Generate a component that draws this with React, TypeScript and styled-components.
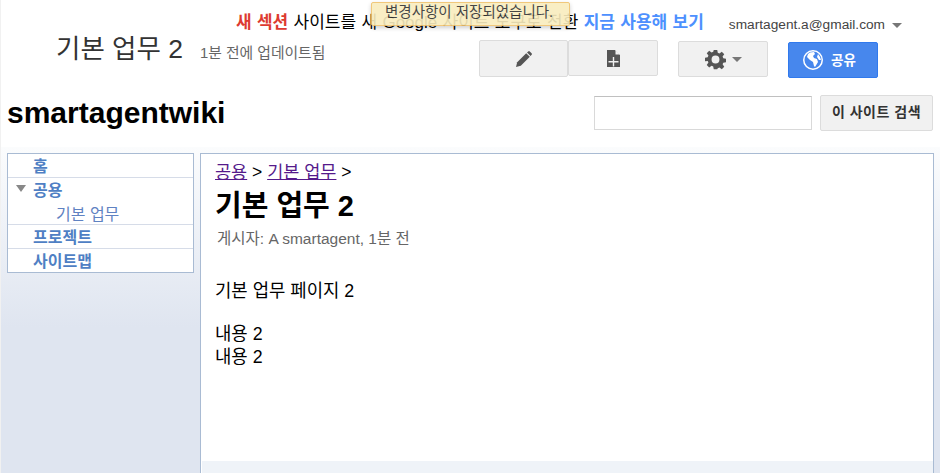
import React from 'react';
import styled, { createGlobalStyle } from 'styled-components';

const GlobalStyle = createGlobalStyle`
  html, body {
    margin: 0;
    padding: 0;
    height: 473px;
    overflow: hidden;
    background: #fff;
    font-family: "Liberation Sans", Arial, "Noto Sans CJK KR", sans-serif;
    color: #000;
  }
`;

const Page = styled('div')`
  border-left: 1px solid #f1f1f1;
  display: flex;
  flex-direction: column;
  height: 473px;
  position: relative;
  box-sizing: border-box;
`;

const Header = styled('header')`
  display: flex;
  flex-direction: column;
  height: 147px;
  flex: none;
  box-sizing: border-box;
`;

const NoticeRow = styled('div')`
  display: flex;
  height: 40px;
  align-items: flex-start;
  padding: 13px 38px 0 235px;
  box-sizing: border-box;
  justify-content: space-between;
`;

const Notice = styled('div')`
  font-size: 17px;
  line-height: 20px;
  white-space: nowrap;
  word-spacing: 0.6px;
`;

const NewSection = styled('span')`
  color: #dd3b30;
  font-weight: bold;
`;

const TryLink = styled('a')`
  color: #4d90fe;
  font-weight: bold;
`;

const Account = styled('div')`
  align-items: center;
  color: #444;
  display: flex;
  font-size: 13.7px;
  gap: 7px;
  line-height: 24px;
`;

const Caret = styled('span')<{ $color?: string }>`
  border-left: 5px solid transparent;
  border-right: 5px solid transparent;
  border-top: 5px solid ${(p) => p.$color ?? '#777'};
  display: inline-block;
  height: 0;
  width: 0;
`;

const TitleRow = styled('div')`
  display: flex;
  height: 44px;
  justify-content: space-between;
  padding: 0 62px 0 55px;
`;

const PageHeading = styled('div')`
  align-items: baseline;
  display: flex;
  gap: 17px;
`;

const PageName = styled('span')`
  color: #333;
  font-size: 26.5px;
  line-height: 18px;
`;

const Updated = styled('span')`
  color: #666;
  font-size: 14.8px;
`;

const Actions = styled('div')`
  align-items: flex-start;
  display: flex;
`;

const GreyButton = styled('button')<{ $width: number; $height?: number }>`
  align-items: center;
  background: #f1f1f1;
  border: 1px solid #dcdcdc;
  border-radius: 2px;
  box-sizing: border-box;
  display: flex;
  gap: 6px;
  height: ${(p) => p.$height ?? 36}px;
  justify-content: center;
  padding: 0;
  width: ${(p) => p.$width}px;
`;

const GearButton = styled(GreyButton)`
  margin: 1px 20px 0 20px;
`;

const ShareButton = styled('button')`
  align-items: center;
  background: #4787ed;
  border: 1px solid #3079ed;
  border-radius: 2px;
  box-sizing: border-box;
  color: #fff;
  display: flex;
  font-family: inherit;
  font-size: 13.5px;
  font-weight: bold;
  gap: 8px;
  height: 36px;
  margin-top: 2px;
  padding: 0 0 0 14px;
  width: 90px;
`;

const ShareLabel = styled('span')`
  margin-bottom: 3px;
`;

const SiteRow = styled('div')`
  align-items: flex-start;
  display: flex;
  justify-content: space-between;
  padding: 11px 6px 0 6px;
`;

const SiteName = styled('div')`
  font-size: 30px;
  font-weight: bold;
  line-height: 36px;
`;

const SearchForm = styled('div')`
  display: flex;
  gap: 8px;
  padding-right: 1px;
`;

const SearchInput = styled('input')`
  background: #fff;
  border: 1px solid #d9d9d9;
  border-top-color: #c0c0c0;
  box-sizing: border-box;
  height: 34px;
  margin-top: 1px;
  padding: 0 6px;
  width: 218px;
`;

const SearchButton = styled(GreyButton)`
  color: #333;
  font-family: inherit;
  font-size: 14px;
  font-weight: bold;
  letter-spacing: 0.5px;
  padding-bottom: 5px;
`;

const Body = styled('div')`
  background: linear-gradient(#fbfcfd 0, #dfe5f0 180px);
  display: flex;
  flex: 1;
  gap: 6px;
  min-height: 0;
  padding: 6px 6px 0 6px;
`;

const Sidebar = styled('nav')`
  background: #fff;
  border: 1px solid #a9bbd3;
  align-self: flex-start;
  box-sizing: border-box;
  width: 187px;
`;

const NavGroup = styled('div')`
  border-top: 1px solid #d6dce8;
  &:first-child {
    border-top: 0;
  }
`;

const NavItem = styled('div')<{ $nested?: boolean; $bold?: boolean }>`
  align-items: center;
  box-sizing: border-box;
  color: ${(p) => (p.$nested ? '#5f82c2' : '#4f7fc4')};
  display: flex;
  font-size: 16px;
  font-weight: ${(p) => (p.$bold ? 'bold' : 'normal')};
  height: 23px;
  padding-bottom: ${(p) => (p.$nested ? 0 : 2)}px;
  padding-left: ${(p) => (p.$nested ? 48 : 25)}px;
  position: relative;
`;

const Twisty = styled('span')`
  border-left: 5.5px solid transparent;
  border-right: 5.5px solid transparent;
  border-top: 7px solid #888;
  left: 8px;
  position: absolute;
  top: 7px;
`;

const Main = styled('main')`
  background: #fff;
  border: 1px solid #a9bbd3;
  border-bottom: 0;
  box-sizing: border-box;
  display: flex;
  flex: 1;
  flex-direction: column;
`;

const Content = styled('div')`
  flex: 1;
  padding: 7px 14px 0;
`;

const Breadcrumb = styled('div')`
  font-size: 17.5px;
  line-height: 22px;
  a {
    color: #551a8b;
    text-decoration: underline;
  }
`;

const Heading = styled('h1')`
  font-size: 29px;
  line-height: 38px;
  margin: 4px 0 0;
`;

const Byline = styled('div')`
  color: #666;
  font-size: 15.5px;
  line-height: 20px;
  margin-top: 4px;
  padding-left: 2px;
`;

const Paragraph = styled('p')`
  font-size: 17.8px;
  line-height: 23px;
  margin: 0;
`;

const Article = styled('div')`
  display: flex;
  flex-direction: column;
  margin-top: 31px;
  gap: 20px;
`;

const Footer = styled('div')`
  background: #eff3f8;
  flex: none;
  height: 12px;
  margin-left: 1px;
`;

const Toast = styled('div')`
  background: #f9edbe;
  border: 1px solid #f0c36d;
  border-radius: 2px;
  box-shadow: 0 2px 4px rgba(0, 0, 0, 0.2);
  box-sizing: border-box;
  color: #333;
  font-size: 14.5px;
  height: 24px;
  left: 370px;
  line-height: 18px;
  opacity: 0.9;
  padding: 0 0 0 13px;
  position: absolute;
  top: 2px;
  white-space: nowrap;
  width: 199px;
`;

const PencilIcon = () => (
  <svg width="16" height="16" viewBox="0 0 16 16" fill="#555">
    <path d="M0 16 1.2 11.2 10.2 2.2 13.8 5.8 4.8 14.8Z" />
    <path d="M11 1.4 12.2.4a1.2 1.2 0 0 1 1.6 0l1.8 1.8a1.2 1.2 0 0 1 0 1.6L14.6 5Z" />
  </svg>
);

const NewPageIcon = () => (
  <svg width="13" height="17" viewBox="0 0 13 17" fill="#555">
    <path d="M0 0H8L13 5V17H0Z" />
    <path d="M8.5 0 13 4.5H8.5Z" fill="#f1f1f1" />
    <path d="M5.8 7H7.2V11H11.5V12.4H7.2V16.5H5.8V12.4H1.5V11H5.8Z" fill="#f1f1f1" />
  </svg>
);

const GearIcon = () => (
  <svg width="21" height="21" viewBox="0 0 24 24" fill="#555">
    <path
      fillRule="evenodd"
      d="M10 1h4l.6 3.2 1.9.8 2.7-1.9 2.8 2.8-1.9 2.7.8 1.9 3.1.5v4l-3.1.6-.8 1.9 1.9 2.7-2.8 2.8-2.7-1.9-1.9.8L14 23h-4l-.6-3.1-1.9-.8-2.7 1.9-2.8-2.8 1.9-2.7-.8-1.9L0 13.9v-4l3.1-.5.8-1.9L2 4.8 4.8 2l2.7 1.9 1.9-.8ZM12 7.5a4.5 4.5 0 1 0 0 9 4.5 4.5 0 0 0 0-9Z"
    />
  </svg>
);

const GlobeIcon = () => (
  <svg width="20" height="20" viewBox="0 0 20 20" fill="#fff">
    <path
      fillRule="evenodd"
      d="M10 0a10 10 0 1 0 0 20 10 10 0 0 0 0-20ZM10 1.5a8.5 8.5 0 1 1 0 17 8.5 8.5 0 0 1 0-17Z"
    />
    <path d="M7 2.5 11 2l1 2-2 2 1 2 3 1 1 3-3 5-1-1-1-4-3-2-3-3 1-3ZM15 4l2 3 1 3-2 0-2-3Z" />
  </svg>
);

export default function App() {
  return (
    <Page>
      <GlobalStyle />
      <Header>
        <NoticeRow>
          <Notice>
            <NewSection>새 섹션</NewSection> 사이트를 새 Google 사이트 도구로 전환{' '}
            <TryLink>지금 사용해 보기</TryLink>
          </Notice>
          <Account>
            smartagent.a@gmail.com
            <Caret />
          </Account>
        </NoticeRow>
        <TitleRow>
          <PageHeading>
            <PageName>기본 업무 2</PageName>
            <Updated>1분 전에 업데이트됨</Updated>
          </PageHeading>
          <Actions>
            <GreyButton $width={89} $height={37}>
              <PencilIcon />
            </GreyButton>
            <GreyButton $width={90}>
              <NewPageIcon />
            </GreyButton>
            <GearButton $width={90}>
              <GearIcon />
              <Caret />
            </GearButton>
            <ShareButton>
              <GlobeIcon />
              <ShareLabel>공유</ShareLabel>
            </ShareButton>
          </Actions>
        </TitleRow>
        <SiteRow>
          <SiteName>smartagentwiki</SiteName>
          <SearchForm>
            <SearchInput />
            <SearchButton $width={113}>이 사이트 검색</SearchButton>
          </SearchForm>
        </SiteRow>
      </Header>
      <Body>
        <Sidebar>
          <NavGroup>
            <NavItem $bold>홈</NavItem>
          </NavGroup>
          <NavGroup>
            <NavItem $bold>
              <Twisty />
              공용
            </NavItem>
            <NavItem $nested>기본 업무</NavItem>
          </NavGroup>
          <NavGroup>
            <NavItem $bold>프로젝트</NavItem>
          </NavGroup>
          <NavGroup>
            <NavItem $bold>사이트맵</NavItem>
          </NavGroup>
        </Sidebar>
        <Main>
          <Content>
            <Breadcrumb>
              <a>공용</a> &gt; <a>기본 업무</a> &gt;
            </Breadcrumb>
            <Heading>기본 업무 2</Heading>
            <Byline>게시자: A smartagent, 1분 전</Byline>
            <Article>
              <Paragraph>기본 업무 페이지 2</Paragraph>
              <div>
                <Paragraph>내용 2</Paragraph>
                <Paragraph>내용 2</Paragraph>
              </div>
            </Article>
          </Content>
          <Footer />
        </Main>
      </Body>
      <Toast>변경사항이 저장되었습니다.</Toast>
    </Page>
  );
}
